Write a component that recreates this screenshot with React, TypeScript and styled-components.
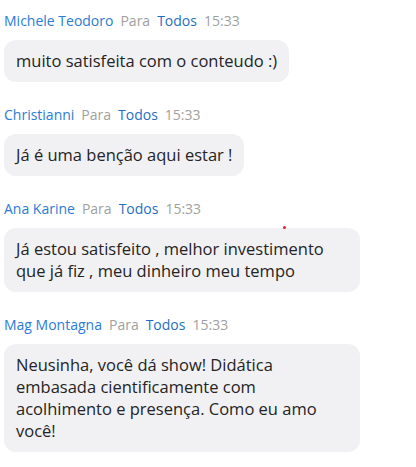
import styled, { createGlobalStyle } from 'styled-components'

interface Message {
  id: number
  author: string
  to: string
  time: string
  text: string
}

const messages: Message[] = [
  { id: 1, author: 'Michele Teodoro', to: 'Todos', time: '15:33', text: 'muito satisfeita com o conteudo :)' },
  { id: 2, author: 'Christianni', to: 'Todos', time: '15:33', text: 'Já é uma benção aqui estar !' },
  {
    id: 3,
    author: 'Ana Karine',
    to: 'Todos',
    time: '15:33',
    text: 'Já estou satisfeito , melhor investimento que já fiz , meu dinheiro meu tempo'
  },
  {
    id: 4,
    author: 'Mag Montagna',
    to: 'Todos',
    time: '15:33',
    text: 'Neusinha, você dá show! Didática embasada cientificamente com acolhimento e presença. Como eu amo você!'
  }
]

const GlobalStyle = createGlobalStyle`
  body {
    margin: 0;
    background: #ffffff;
    font-family: 'Open Sans', 'Noto Sans', sans-serif;
  }
`

function App() {
  return (
    <ChatContainer>
      <GlobalStyle />
      <Dot />
      {messages.map((message) => (
        <MessageItem key={message.id}>
          <Header>
            <Author>{message.author}</Author>
            <Muted>Para</Muted>
            <Recipient>{message.to}</Recipient>
            <Muted>{message.time}</Muted>
          </Header>
          <Bubble>{message.text}</Bubble>
        </MessageItem>
      ))}
    </ChatContainer>
  )
}

export default App

const ChatContainer = styled.div`
  position: relative;
  padding: 12px 4px 0 4px;
  display: flex;
  flex-direction: column;
  gap: 24px;
`

const MessageItem = styled.div`
  display: flex;
  flex-direction: column;
  align-items: flex-start;
  gap: 10px;
`

const Header = styled.div`
  display: flex;
  align-items: center;
  gap: 7px;
  font-size: 14px;
  line-height: 18px;
`

const Author = styled.span`
  color: #2b7cd3;
`

const Recipient = styled.span`
  color: #1f6fc0;
`

const Muted = styled.span`
  color: #9f9f9f;
`

const Bubble = styled.div`
  background: #f1f1f4;
  color: #242424;
  border-radius: 12px;
  padding: 10px 12px;
  max-width: 356px;
  box-sizing: border-box;
  font-size: 16.5px;
  line-height: 22px;
`

const Dot = styled.span`
  position: absolute;
  left: 283px;
  top: 226px;
  width: 3px;
  height: 3px;
  border-radius: 50%;
  background: #e0202a;
`
